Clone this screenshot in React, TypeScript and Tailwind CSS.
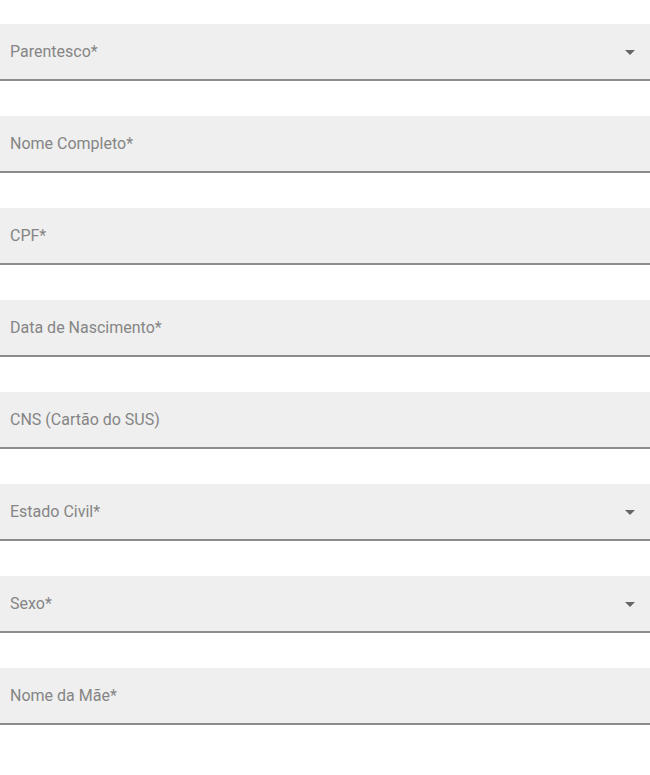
const FIELDS = [
  { label: 'Parentesco*', select: true },
  { label: 'Nome Completo*', select: false },
  { label: 'CPF*', select: false },
  { label: 'Data de Nascimento*', select: false },
  { label: 'CNS (Cartão do SUS)', select: false },
  { label: 'Estado Civil*', select: true },
  { label: 'Sexo*', select: true },
  { label: 'Nome da Mãe*', select: false },
]

function Field({ label, select }: { label: string; select: boolean }) {
  return (
    <div className="flex h-[57px] items-center justify-between border-b-2 border-[#8c8c8c] bg-[#efefef] pl-[10px] pr-[15px]">
      <span className="text-[16px] text-[#858585]" style={{ fontFamily: 'Roboto, sans-serif' }}>
        {label}
      </span>
      {select && (
        <svg width="10" height="5" viewBox="0 0 10 5" className="mt-[1px]">
          <path d="M0 0h10L5 5z" fill="#666666" />
        </svg>
      )}
    </div>
  )
}

export default function App() {
  return (
    <div className="min-h-[775px] w-[650px] bg-white pt-[24px]" style={{ fontFamily: 'Roboto, sans-serif' }}>
      <div className="flex flex-col gap-[35px]">
        {FIELDS.map((f) => (
          <Field key={f.label} label={f.label} select={f.select} />
        ))}
      </div>
    </div>
  )
}
